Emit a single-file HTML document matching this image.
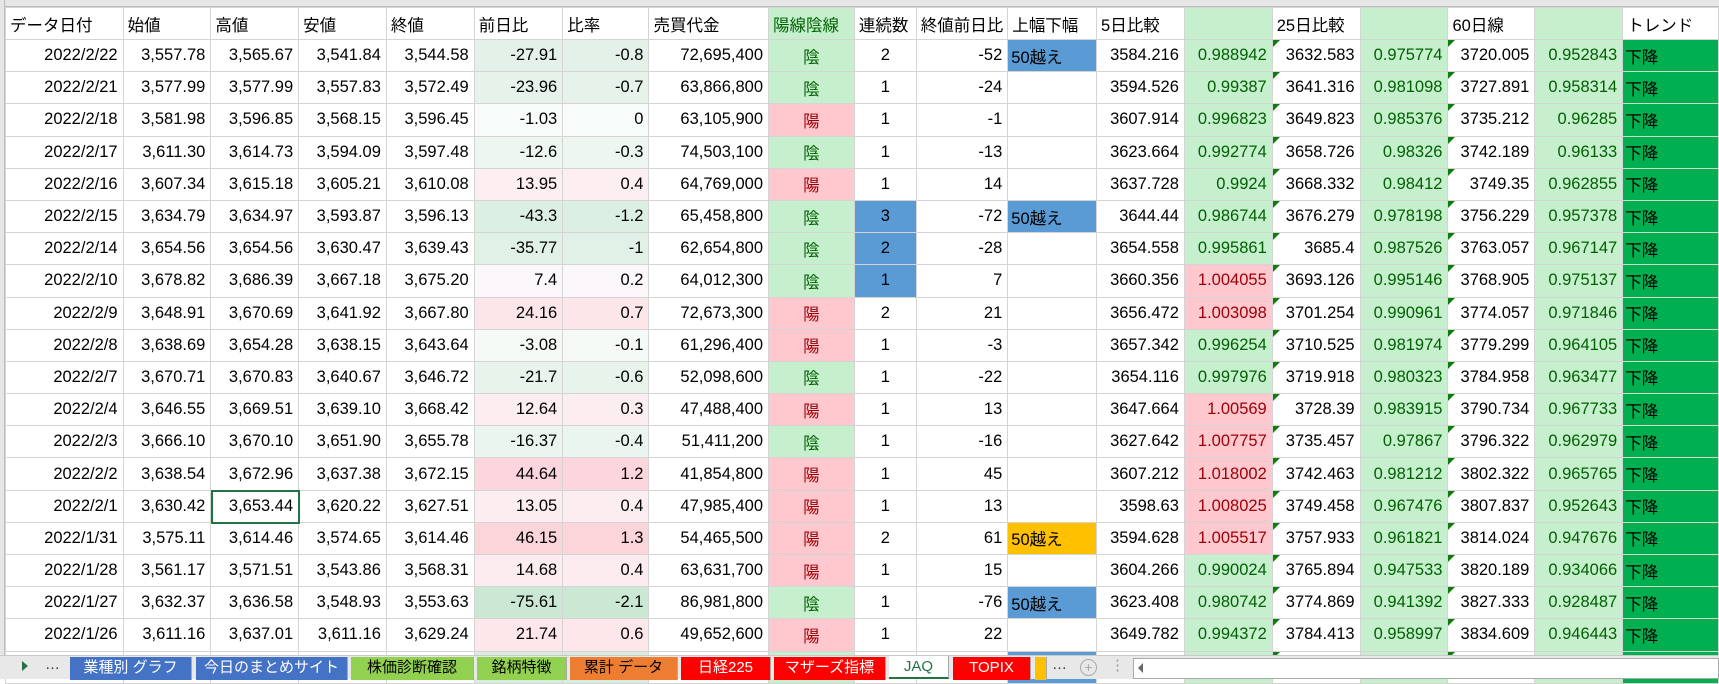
<!DOCTYPE html>
<html><head><meta charset="utf-8"><style>
*{margin:0;padding:0;box-sizing:border-box}
body{width:1719px;height:679px;overflow:hidden;background:#fff;font-family:"Liberation Sans","Noto Sans CJK JP",sans-serif;font-size:16.5px;color:#000;position:relative}
#top{position:absolute;left:0;top:0;width:1719px;height:7px;background:#e6e6e6;border-bottom:1px solid #bdbdbd}
#lft{position:absolute;left:0;top:0;width:5px;height:656px;background:#e6e6e6;border-right:1px solid #bdbdbd}
table{position:absolute;left:5px;top:7px;border-collapse:collapse;table-layout:fixed}
td{border:1px solid #d4d4d4;height:32.2px;white-space:nowrap;overflow:hidden;text-align:right;padding:0 5px;position:relative}
tr.h td{height:32px;text-align:left;padding:0 4px}
td.c{text-align:center}
td.l{text-align:left;padding-left:3px}
.g{background:#c6efce;color:#006100}
.p{background:#ffc7ce;color:#9c0006}
.b{background:#5b9bd5}
.o{background:#ffc000}
.t{background:#00b050;text-align:left;padding-left:2px}
.tri::before{content:"";position:absolute;left:0;top:0;border-top:7px solid #107c10;border-right:7px solid transparent}
#sel{position:absolute;left:211px;top:490px;width:89px;height:34px;border:2px solid #217346}
#tabs{position:absolute;left:0;top:655px;width:1719px;height:24px;background:#e8e8e8;border-top:1px solid #c8c8c8;font-size:15px}
.tab{position:absolute;top:1px;height:23px;color:#fff;text-align:center;line-height:22px;border-right:1px solid #aaa}
</style></head><body>
<div id="top"></div><div id="lft"></div>
<table>
<colgroup><col style="width:118px"><col style="width:88px"><col style="width:88px"><col style="width:88px"><col style="width:88px"><col style="width:89px"><col style="width:87px"><col style="width:120px"><col style="width:86px"><col style="width:62px"><col style="width:88px"><col style="width:89px"><col style="width:88px"><col style="width:88px"><col style="width:88px"><col style="width:88px"><col style="width:87px"><col style="width:88px"><col style="width:96px"></colgroup>
<tr class="h"><td>データ日付</td><td>始値</td><td>高値</td><td>安値</td><td>終値</td><td>前日比</td><td>比率</td><td>売買代金</td><td class="g">陽線陰線</td><td>連続数</td><td>終値前日比</td><td>上幅下幅</td><td>5日比較</td><td class="g"></td><td>25日比較</td><td class="g"></td><td>60日線</td><td class="g"></td><td>トレンド</td></tr>
<tr><td>2022/2/22</td><td>3,557.78</td><td>3,565.67</td><td>3,541.84</td><td>3,544.58</td><td style="background:#e3f1e8">-27.91</td><td style="background:#e3f1e8">-0.8</td><td>72,695,400</td><td class="c g">陰</td><td class="c">2</td><td>-52</td><td class="l b">50越え</td><td>3584.216</td><td class="g">0.988942</td><td class="tri">3632.583</td><td class="g">0.975774</td><td class="tri">3720.005</td><td class="g">0.952843</td><td class="t">下降</td></tr>
<tr><td>2022/2/21</td><td>3,577.99</td><td>3,577.99</td><td>3,557.83</td><td>3,572.49</td><td style="background:#e6f2ea">-23.96</td><td style="background:#e6f2ea">-0.7</td><td>63,866,800</td><td class="c g">陰</td><td class="c">1</td><td>-24</td><td></td><td>3594.526</td><td class="g">0.99387</td><td class="tri">3641.316</td><td class="g">0.981098</td><td class="tri">3727.891</td><td class="g">0.958314</td><td class="t">下降</td></tr>
<tr><td>2022/2/18</td><td>3,581.98</td><td>3,596.85</td><td>3,568.15</td><td>3,596.45</td><td style="background:#f7fbf9">-1.03</td><td style="background:#f7fbf9">0</td><td>63,105,900</td><td class="c p">陽</td><td class="c">1</td><td>-1</td><td></td><td>3607.914</td><td class="g">0.996823</td><td class="tri">3649.823</td><td class="g">0.985376</td><td class="tri">3735.212</td><td class="g">0.96285</td><td class="t">下降</td></tr>
<tr><td>2022/2/17</td><td>3,611.30</td><td>3,614.73</td><td>3,594.09</td><td>3,597.48</td><td style="background:#eef6f1">-12.6</td><td style="background:#eef6f1">-0.3</td><td>74,503,100</td><td class="c g">陰</td><td class="c">1</td><td>-13</td><td></td><td>3623.664</td><td class="g">0.992774</td><td class="tri">3658.726</td><td class="g">0.98326</td><td class="tri">3742.189</td><td class="g">0.96133</td><td class="t">下降</td></tr>
<tr><td>2022/2/16</td><td>3,607.34</td><td>3,615.18</td><td>3,605.21</td><td>3,610.08</td><td style="background:#fdeef1">13.95</td><td style="background:#fdeef1">0.4</td><td>64,769,000</td><td class="c p">陽</td><td class="c">1</td><td>14</td><td></td><td>3637.728</td><td class="g">0.9924</td><td class="tri">3668.332</td><td class="g">0.98412</td><td class="tri">3749.35</td><td class="g">0.962855</td><td class="t">下降</td></tr>
<tr><td>2022/2/15</td><td>3,634.79</td><td>3,634.97</td><td>3,593.87</td><td>3,596.13</td><td style="background:#dcefe3">-43.3</td><td style="background:#dcefe3">-1.2</td><td>65,458,800</td><td class="c g">陰</td><td class="c b">3</td><td>-72</td><td class="l b">50越え</td><td>3644.44</td><td class="g">0.986744</td><td class="tri">3676.279</td><td class="g">0.978198</td><td class="tri">3756.229</td><td class="g">0.957378</td><td class="t">下降</td></tr>
<tr><td>2022/2/14</td><td>3,654.56</td><td>3,654.56</td><td>3,630.47</td><td>3,639.43</td><td style="background:#e0f1e6">-35.77</td><td style="background:#e2f1e8">-1</td><td>62,654,800</td><td class="c g">陰</td><td class="c b">2</td><td>-28</td><td></td><td>3654.558</td><td class="g">0.995861</td><td class="tri">3685.4</td><td class="g">0.987526</td><td class="tri">3763.057</td><td class="g">0.967147</td><td class="t">下降</td></tr>
<tr><td>2022/2/10</td><td>3,678.82</td><td>3,686.39</td><td>3,667.18</td><td>3,675.20</td><td style="background:#fbf7fa">7.4</td><td style="background:#fbf7fa">0.2</td><td>64,012,300</td><td class="c g">陰</td><td class="c b">1</td><td>7</td><td></td><td>3660.356</td><td class="p">1.004055</td><td class="tri">3693.126</td><td class="g">0.995146</td><td class="tri">3768.905</td><td class="g">0.975137</td><td class="t">下降</td></tr>
<tr><td>2022/2/9</td><td>3,648.91</td><td>3,670.69</td><td>3,641.92</td><td>3,667.80</td><td style="background:#fde6ea">24.16</td><td style="background:#fde6ea">0.7</td><td>72,673,300</td><td class="c p">陽</td><td class="c">2</td><td>21</td><td></td><td>3656.472</td><td class="p">1.003098</td><td class="tri">3701.254</td><td class="g">0.990961</td><td class="tri">3774.057</td><td class="g">0.971846</td><td class="t">下降</td></tr>
<tr><td>2022/2/8</td><td>3,638.69</td><td>3,654.28</td><td>3,638.15</td><td>3,643.64</td><td style="background:#f5faf7">-3.08</td><td style="background:#f5faf7">-0.1</td><td>61,296,400</td><td class="c p">陽</td><td class="c">1</td><td>-3</td><td></td><td>3657.342</td><td class="g">0.996254</td><td class="tri">3710.525</td><td class="g">0.981974</td><td class="tri">3779.299</td><td class="g">0.964105</td><td class="t">下降</td></tr>
<tr><td>2022/2/7</td><td>3,670.71</td><td>3,670.83</td><td>3,640.67</td><td>3,646.72</td><td style="background:#e8f3ec">-21.7</td><td style="background:#e8f3ec">-0.6</td><td>52,098,600</td><td class="c g">陰</td><td class="c">1</td><td>-22</td><td></td><td>3654.116</td><td class="g">0.997976</td><td class="tri">3719.918</td><td class="g">0.980323</td><td class="tri">3784.958</td><td class="g">0.963477</td><td class="t">下降</td></tr>
<tr><td>2022/2/4</td><td>3,646.55</td><td>3,669.51</td><td>3,639.10</td><td>3,668.42</td><td style="background:#fcedf0">12.64</td><td style="background:#fcedf0">0.3</td><td>47,488,400</td><td class="c p">陽</td><td class="c">1</td><td>13</td><td></td><td>3647.664</td><td class="p">1.00569</td><td class="tri">3728.39</td><td class="g">0.983915</td><td class="tri">3790.734</td><td class="g">0.967733</td><td class="t">下降</td></tr>
<tr><td>2022/2/3</td><td>3,666.10</td><td>3,670.10</td><td>3,651.90</td><td>3,655.78</td><td style="background:#ebf5ef">-16.37</td><td style="background:#ebf5ef">-0.4</td><td>51,411,200</td><td class="c g">陰</td><td class="c">1</td><td>-16</td><td></td><td>3627.642</td><td class="p">1.007757</td><td class="tri">3735.457</td><td class="g">0.97867</td><td class="tri">3796.322</td><td class="g">0.962979</td><td class="t">下降</td></tr>
<tr><td>2022/2/2</td><td>3,638.54</td><td>3,672.96</td><td>3,637.38</td><td>3,672.15</td><td style="background:#fcd6dc">44.64</td><td style="background:#fcd6dc">1.2</td><td>41,854,800</td><td class="c p">陽</td><td class="c">1</td><td>45</td><td></td><td>3607.212</td><td class="p">1.018002</td><td class="tri">3742.463</td><td class="g">0.981212</td><td class="tri">3802.322</td><td class="g">0.965765</td><td class="t">下降</td></tr>
<tr><td>2022/2/1</td><td>3,630.42</td><td>3,653.44</td><td>3,620.22</td><td>3,627.51</td><td style="background:#fcedf0">13.05</td><td style="background:#fcedf0">0.4</td><td>47,985,400</td><td class="c p">陽</td><td class="c">1</td><td>13</td><td></td><td>3598.63</td><td class="p">1.008025</td><td class="tri">3749.458</td><td class="g">0.967476</td><td class="tri">3807.837</td><td class="g">0.952643</td><td class="t">下降</td></tr>
<tr><td>2022/1/31</td><td>3,575.11</td><td>3,614.46</td><td>3,574.65</td><td>3,614.46</td><td style="background:#fcd5db">46.15</td><td style="background:#fcd5db">1.3</td><td>54,465,500</td><td class="c p">陽</td><td class="c">2</td><td>61</td><td class="l o">50越え</td><td>3594.628</td><td class="p">1.005517</td><td class="tri">3757.933</td><td class="g">0.961821</td><td class="tri">3814.024</td><td class="g">0.947676</td><td class="t">下降</td></tr>
<tr><td>2022/1/28</td><td>3,561.17</td><td>3,571.51</td><td>3,543.86</td><td>3,568.31</td><td style="background:#fcecef">14.68</td><td style="background:#fcecef">0.4</td><td>63,631,700</td><td class="c p">陽</td><td class="c">1</td><td>15</td><td></td><td>3604.266</td><td class="g">0.990024</td><td class="tri">3765.894</td><td class="g">0.947533</td><td class="tri">3820.189</td><td class="g">0.934066</td><td class="t">下降</td></tr>
<tr><td>2022/1/27</td><td>3,632.37</td><td>3,636.58</td><td>3,548.93</td><td>3,553.63</td><td style="background:#cbe8d5">-75.61</td><td style="background:#cbe8d5">-2.1</td><td>86,981,800</td><td class="c g">陰</td><td class="c">1</td><td>-76</td><td class="l b">50越え</td><td>3623.408</td><td class="g">0.980742</td><td class="tri">3774.869</td><td class="g">0.941392</td><td class="tri">3827.333</td><td class="g">0.928487</td><td class="t">下降</td></tr>
<tr><td>2022/1/26</td><td>3,611.16</td><td>3,637.01</td><td>3,611.16</td><td>3,629.24</td><td style="background:#fde7eb">21.74</td><td style="background:#fde7eb">0.6</td><td>49,652,600</td><td class="c p">陽</td><td class="c">1</td><td>22</td><td></td><td>3649.782</td><td class="g">0.994372</td><td class="tri">3784.413</td><td class="g">0.958997</td><td class="tri">3834.609</td><td class="g">0.946443</td><td class="t">下降</td></tr>
<tr><td></td><td></td><td></td><td></td><td></td><td style="background:#d8ede0"></td><td style="background:#d8ede0"></td><td></td><td class="g"></td><td></td><td></td><td class="b"></td><td></td><td class="g"></td><td class="tri"></td><td class="g"></td><td class="tri"></td><td class="g"></td><td class="t"></td></tr>
</table>
<div id="sel"></div>
<div id="tabs">
<div style="position:absolute;left:22px;top:5px;border-left:6px solid #217346;border-top:5px solid transparent;border-bottom:5px solid transparent"></div>
<div style="position:absolute;left:45px;top:0;color:#333">…</div>
<div class="tab" style="left:70px;width:122px;background:#4472c4">業種別 グラフ</div>
<div class="tab" style="left:196px;width:152px;background:#4472c4">今日のまとめサイト</div>
<div class="tab" style="left:351px;width:123px;background:#92d050;color:#000">株価診断確認</div>
<div class="tab" style="left:477px;width:90px;background:#92d050;color:#000">銘柄特徴</div>
<div class="tab" style="left:570px;width:108px;background:#ed7d31;color:#000">累計 データ</div>
<div class="tab" style="left:681px;width:90px;background:#ff0000">日経225</div>
<div class="tab" style="left:774px;width:112px;background:#ff0000">マザーズ指標</div>
<div class="tab" style="left:889px;width:60px;background:#fff;color:#217346;border-bottom:2px solid #217346;top:0">JAQ</div>
<div class="tab" style="left:953px;width:78px;background:#ff0000">TOPIX</div>
<div class="tab" style="left:1035px;width:12px;background:#ffc000"></div>
<div style="position:absolute;left:1052px;top:0;color:#333">…</div>
<div style="position:absolute;left:1080px;top:3px;width:17px;height:17px;border:1px solid #aaa;border-radius:50%;color:#aaa;font-size:14px;line-height:15px;text-align:center">+</div>
<div style="position:absolute;left:1110px;top:0;color:#999">⋮</div>
<div style="position:absolute;left:1133px;top:2px;width:586px;height:21px;background:#fff;border:1px solid #aaa"></div>
<div style="position:absolute;left:1138px;top:7px;border-right:5px solid #666;border-top:5px solid transparent;border-bottom:5px solid transparent"></div>
</div>
</body></html>
